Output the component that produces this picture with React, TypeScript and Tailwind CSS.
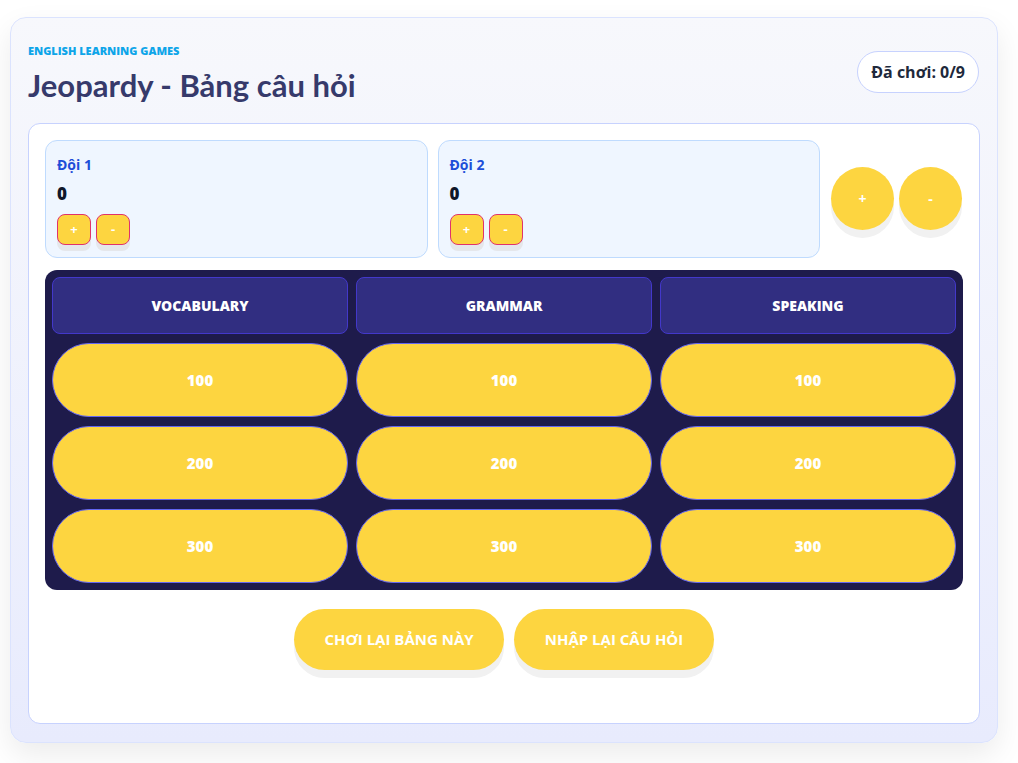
import React from "react";

const categories = ["VOCABULARY", "GRAMMAR", "SPEAKING"];
const points = [100, 200, 300];
const teams = ["Đội 1", "Đội 2"];

const TeamCard = ({ name }: { name: string }) => (
  <div className="flex-1 rounded-xl border border-[#bfdbfe] bg-[#eff6ff] px-[11px] pt-[15px] pb-[12px]">
    <div className="text-[14px] font-bold leading-[18px] text-[#1d4ed8]">{name}</div>
    <div className="mt-[10px] text-[17px] font-extrabold leading-[20px] text-[#0f172a]">0</div>
    <div className="mt-[10px] flex gap-[5px]">
      {["+", "-"].map((s) => (
        <button
          key={s}
          className="h-[31px] w-[34px] rounded-lg border border-[#e0336b] bg-[#fdd540] text-[13px] font-bold text-white shadow-[0_6px_0_#e5e7eb]"
        >
          {s}
        </button>
      ))}
    </div>
  </div>
);

export default function App() {
  return (
    <div className="min-h-screen bg-white pt-[17px] pl-[10px] pr-[20px] font-['Open_Sans',sans-serif]">
      <div className="w-[988px] rounded-2xl border border-[#dbe3fe] bg-gradient-to-b from-[#f7f8fc] to-[#e8ebfd] px-[17px] pt-[26px] pb-[18px] shadow-[0_12px_30px_rgba(0,0,0,0.08)]">
        {/* header */}
        <div className="flex items-start justify-between">
          <div>
            <div className="text-[11px] font-extrabold leading-[14px] text-[#0ea5e9]">ENGLISH LEARNING GAMES</div>
            <h1 className="mt-[8px] font-['Lato',sans-serif] text-[31px] font-bold leading-[38px] text-[#363a6b]">
              Jeopardy - Bảng câu hỏi
            </h1>
          </div>
          <div className="mt-[7px] mr-[1px] rounded-full border border-[#c7d2fe] bg-white px-[13px] py-[9px] text-[16px] font-bold leading-[22px] text-[#1e293b]">
            Đã chơi: 0/9
          </div>
        </div>

        {/* main panel */}
        <div className="mt-[19px] h-[601px] rounded-xl border border-[#c7d2fe] bg-white px-[16px] pt-[16px]">
          <div className="flex items-center gap-[10px]">
            {teams.map((t) => (
              <TeamCard key={t} name={t} />
            ))}
            <div className="flex gap-[5px] pl-[1px] pr-[1px] pb-[2px]">
              {["+", "-"].map((s) => (
                <button
                  key={s}
                  className="size-[63px] rounded-full bg-[#fdd540] text-[14px] font-bold text-white shadow-[0_8px_0_#f1f1f1]"
                >
                  {s}
                </button>
              ))}
            </div>
          </div>

          {/* board */}
          <div className="mt-[12px] rounded-xl bg-[#1e1b4b] p-[7px]">
            <div className="grid grid-cols-3 gap-x-[8px] gap-y-[9px]">
              {categories.map((c) => (
                <div
                  key={c}
                  className="flex h-[57px] items-center justify-center rounded-lg border border-[#4338ca] bg-[#312e81] text-[14px] font-extrabold text-white"
                >
                  {c}
                </div>
              ))}
              {points.map((p) =>
                categories.map((c) => (
                  <button
                    key={c + p}
                    className="h-[74px] rounded-full border border-[#6366f1] bg-[#fdd540] text-[15px] font-extrabold text-white"
                  >
                    {p}
                  </button>
                ))
              )}
            </div>
          </div>

          {/* actions */}
          <div className="mt-[19px] flex justify-center gap-[10px]">
            <button className="h-[61px] w-[210px] rounded-full bg-[#fdd540] text-[15px] font-bold text-white shadow-[0_8px_0_#f1f1f1]">
              CHƠI LẠI BẢNG NÀY
            </button>
            <button className="h-[61px] w-[200px] rounded-full bg-[#fdd540] text-[15px] font-bold text-white shadow-[0_8px_0_#f1f1f1]">
              NHẬP LẠI CÂU HỎI
            </button>
          </div>
        </div>
      </div>
    </div>
  );
}
